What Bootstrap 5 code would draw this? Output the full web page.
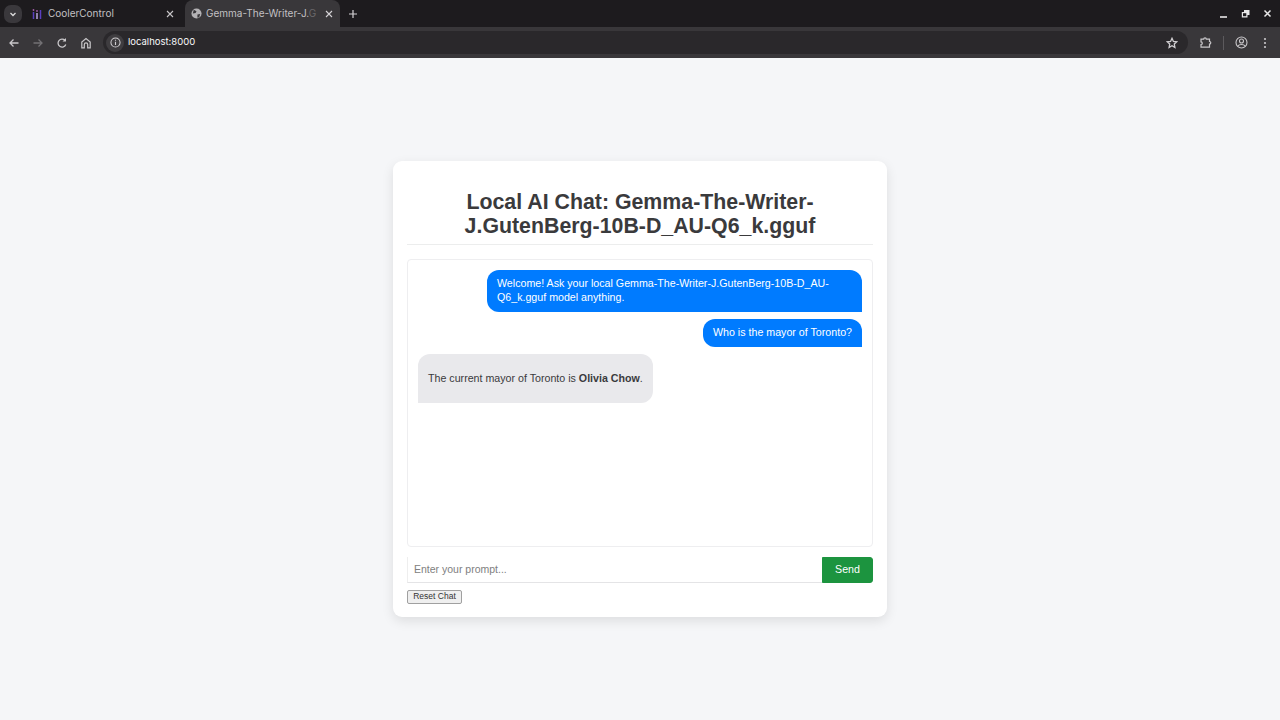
<!doctype html>
<html lang="en"><head><meta charset="utf-8"><title>Local AI Chat</title>
<link href="https://cdn.jsdelivr.net/npm/bootstrap@5.3.0/dist/css/bootstrap.min.css" rel="stylesheet">
<style>
html,body{height:100%}
body{background:#f5f6f8;font-family:"Liberation Sans",Arial,sans-serif;color:#333;overflow:hidden}
.shell{height:720px}
.tabstrip{height:27px;background:#1d1b1e;color:#c2c0c3;font-family:Inter,"Noto Sans",sans-serif;font-size:10px;padding-left:4px}
.tabmenu{width:18px;height:18px;border-radius:7px;background:#3a383c;margin-right:5px}
.btab{height:27px;width:158px;padding:0 11px 0 4px}
.btab.act{background:#39373a;border-radius:8px 8px 0 0;width:155px;padding:0 7px 0 6px}
.btab .ttl{flex:1;white-space:nowrap;margin-left:5px}
.btab.act .ttl{margin-left:4px}
.fadeout{opacity:.35}
.plusico{margin-left:8px}
.winbtns{gap:13px;padding-right:8px}
.toolbar{height:31px;background:#39373a;color:#c9c7ca;padding:0 13px 0 8px;font-family:Inter,"Noto Sans",sans-serif;font-size:9.5px}
.navico{margin-right:12px}
.omni{height:23px;background:#2a282b;border-radius:12px;flex:1;padding:0 10px 0 3px;margin:0 11px 0 11px}
.infochip{width:18px;height:18px;border-radius:50%;background:#3f3d40;margin-right:4px}
.ico{flex:none;display:block}
.tbsep{width:1px;height:14px;background:#5c5a5d;margin:0 11px}
.profico{margin-right:15px}
.stage{flex:1}
.chatcard{width:494px;height:456px;background:#fff;border-radius:9px;box-shadow:0 4px 12px rgba(0,0,0,.1);padding:29px 14px 13px}
.chatcard h1{font-size:21.33px;line-height:24px;font-weight:700;text-align:center;margin:0 40px;padding:0;color:#3a3a3c}
.rule{height:1px;background:#eceded;margin:6px 0 14px}
.chatbox{height:288px;border:1px solid #eeeef0;border-radius:4px;padding:10px;gap:7.6px;font-size:10.67px;line-height:14.4px}
.bub{padding:6px 10px 7px;max-width:375px}
.bub.me{background:#007bff;color:#fff;border-radius:12px 12px 0 12px;align-self:flex-end}
.bub.ai{background:#e9e9ec;color:#3a3a3c;border-radius:12px 12px 12px 0;align-self:flex-start;padding:17px 10px}
.sendrow{margin-top:10px;height:26px}
.sendrow .form-control{border-radius:0;border:0;border-bottom:1px solid #e4e4e6;border-left:1px solid #eee;font-size:10.5px;padding:0 6px 2px;height:26px;flex:1}
.sendrow .form-control::placeholder{color:#808080}
.sendbtn{width:51px;height:26px;padding:0 0 2px;font-size:10.67px;border-radius:0 3px 3px 0;background:#1c943f;border-color:#1c943f}
.resetbtn{margin-top:7px;width:55px;height:14px;padding:0 0 2px;font-size:8.5px;line-height:10px;border:1px solid #a0a0a0;border-radius:2px;background:#efefef;color:#333;display:block}
</style></head>
<body>
<div class="shell d-flex flex-column">
  <div class="tabstrip d-flex align-items-center">
    <div class="tabmenu d-flex align-items-center justify-content-center"><svg class="ico" width="8" height="8" viewBox="0 0 8 8"><path d="M1.500 3l2.500 2.500L6.500 3" fill="none" stroke="#ddd" stroke-width="1.300"/></svg></div>
    <div class="btab d-flex align-items-center">
      <svg class="ico" width="12" height="12" viewBox="0 0 12 12"><path d="M2.500 4v7" stroke="#5a3fc0" stroke-width="1.500"/><path d="M6 5v6" stroke="#b9a6e0" stroke-width="1.500"/><path d="M9.500 2v9" stroke="#5a3fc0" stroke-width="1.500"/><circle cx="2.500" cy="2" r=".9" fill="#a35ca8"/><circle cx="6" cy="3" r=".9" fill="#a35ca8"/></svg>
      <span class="ttl">CoolerControl</span>
      <svg class="ico" width="8" height="8" viewBox="0 0 8 8"><path d="M1 1l6 6M7 1l-6 6" stroke="#c8c6c9" stroke-width="1.100"/></svg>
    </div>
    <div class="btab act d-flex align-items-center">
      <svg class="ico" width="11" height="11" viewBox="0 0 12 12"><circle cx="6" cy="6" r="5.500" fill="#b4b2b5"/><path d="M3 2l3 1.500-1 2-3 .5zM7 7l3-.5-1 3.500-2 .5z" fill="#39373a"/></svg>
      <span class="ttl">Gemma-The-Writer-J.<span class="fadeout">G</span></span>
      <svg class="ico" width="8" height="8" viewBox="0 0 8 8"><path d="M1 1l6 6M7 1l-6 6" stroke="#d5d3d6" stroke-width="1.100"/></svg>
    </div>
    <svg class="ico plusico" width="10" height="10" viewBox="0 0 10 10"><path d="M5 1v8M1 5h8" stroke="#d5d3d6" stroke-width="1.200"/></svg>
    <div class="flex-grow-1"></div>
    <div class="d-flex align-items-center winbtns">
      <svg class="ico" width="9" height="9" viewBox="0 0 9 9"><path d="M1 8h7" stroke="#e8e8e8" stroke-width="1.600"/></svg>
      <svg class="ico" width="9" height="9" viewBox="0 0 9 9"><path d="M3 1h5.500v5H6.500v2.500H.8V3H3z" fill="#e8e8e8"/><path d="M2 4.200h3.300v3H2z" fill="#1d1b1e"/></svg>
      <svg class="ico" width="9" height="9" viewBox="0 0 9 9"><path d="M1.500 1.500l6 6M7.500 1.500l-6 6" stroke="#e8e8e8" stroke-width="1.500"/></svg>
    </div>
  </div>
  <div class="toolbar d-flex align-items-center">
    <svg class="ico navico" width="12" height="12" viewBox="0 0 12 12"><path d="M10.500 6H2M5.500 2.500L2 6l3.500 3.500" fill="none" stroke="#c9c7ca" stroke-width="1.300"/></svg>
    <svg class="ico navico" width="12" height="12" viewBox="0 0 12 12"><path d="M1.500 6H10M6.500 2.500L10 6 6.500 9.500" fill="none" stroke="#737174" stroke-width="1.300"/></svg>
    <svg class="ico navico" width="12" height="12" viewBox="0 0 12 12"><path d="M9.800 7.500A4 4 0 1 1 9 3.300" fill="none" stroke="#c9c7ca" stroke-width="1.300"/><path d="M10 1v3.500H6.500z" fill="#c9c7ca"/></svg>
    <svg class="ico" width="12" height="12" viewBox="0 0 12 12"><path d="M1.800 10.800V5L6 1.500 10.200 5v5.800H7.700V7.500a1.700 1.700 0 0 0-3.400 0v3.300z" fill="none" stroke="#c9c7ca" stroke-width="1.200"/></svg>
    <div class="omni d-flex align-items-center">
      <div class="infochip d-flex align-items-center justify-content-center">
        <svg class="ico" width="11" height="11" viewBox="0 0 12 12"><circle cx="6" cy="6" r="5" fill="none" stroke="#d0ced1" stroke-width="1.100"/><path d="M6 5.300v3.400M6 3v1.200" stroke="#d0ced1" stroke-width="1.200"/></svg>
      </div>
      <span class="text-light">localhost:8000</span>
      <div class="flex-grow-1"></div>
      <svg class="ico" width="12" height="12" viewBox="0 0 12 12"><path d="M6 1.300l1.400 3.100 3.300.4-2.400 2.300.6 3.300L6 8.800l-2.900 1.600.6-3.300L1.300 4.800l3.300-.4z" fill="none" stroke="#d0ced1" stroke-width="1.300"/></svg>
    </div>
    <svg class="ico" width="13" height="13" viewBox="0 0 13 13"><path d="M2 3.200h2.700a1.300 1.300 0 0 1 2.600 0h3.200v2.300a1.300 1.300 0 0 1 0 2.600v3H2V8.500a1.300 1.300 0 0 0 0-2.600z" fill="none" stroke="#c9c7ca" stroke-width="1.200"/></svg>
    <div class="tbsep"></div>
    <svg class="ico profico" width="13" height="13" viewBox="0 0 13 13"><circle cx="6.500" cy="6.500" r="5.500" fill="none" stroke="#c9c7ca" stroke-width="1.100"/><circle cx="6.500" cy="5" r="2" fill="none" stroke="#c9c7ca" stroke-width="1.100"/><path d="M3 10c1-2 6-2 7 0" fill="none" stroke="#c9c7ca" stroke-width="1.100"/></svg>
    <svg class="ico" width="4" height="12" viewBox="0 0 4 12"><circle cx="2" cy="2" r="1.100" fill="#c9c7ca"/><circle cx="2" cy="6" r="1.100" fill="#c9c7ca"/><circle cx="2" cy="10" r="1.100" fill="#c9c7ca"/></svg>
  </div>
  <div class="stage d-flex align-items-center justify-content-center">
    <div class="chatcard">
      <h1>Local AI Chat: Gemma-The-Writer-J.GutenBerg-10B-D_AU-Q6_k.gguf</h1>
      <div class="rule"></div>
      <div class="chatbox d-flex flex-column">
        <div class="bub me">Welcome! Ask your local Gemma-The-Writer-J.GutenBerg-10B-D_AU-Q6_k.gguf model anything.</div>
        <div class="bub me">Who is the mayor of Toronto?</div>
        <div class="bub ai">The current mayor of Toronto is <strong>Olivia Chow</strong>.</div>
      </div>
      <div class="sendrow d-flex">
        <input class="form-control" type="text" placeholder="Enter your prompt...">
        <button class="btn btn-success sendbtn">Send</button>
      </div>
      <button class="resetbtn">Reset Chat</button>
    </div>
  </div>
</div>
<script src="https://cdn.jsdelivr.net/npm/bootstrap@5.3.0/dist/js/bootstrap.bundle.min.js"></script>
</body></html>
